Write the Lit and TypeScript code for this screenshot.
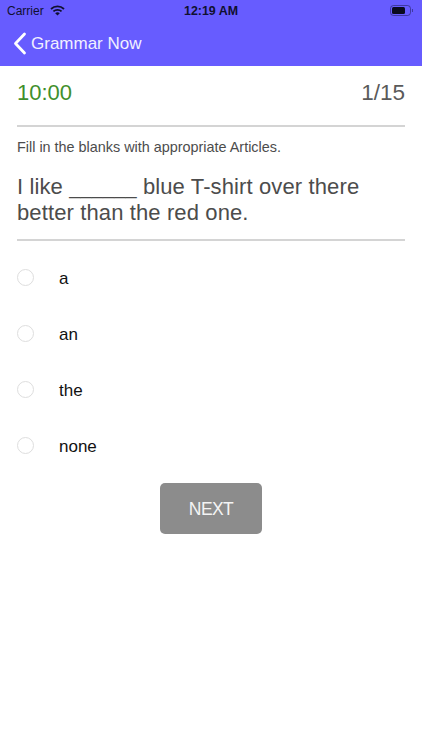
import { LitElement, html, css } from "lit";
import { customElement } from "lit/decorators.js";

@customElement("app-root")
export class AppRoot extends LitElement {
  static styles = css`
    :host { display: block; width: 422px; height: 750px; background: #fff; font-family: "Liberation Sans", Arial, sans-serif; overflow: hidden; }
    .top { background: #675cff; height: 66px; box-sizing: border-box; display: flex; flex-direction: column; }
    .status { height: 21px; position: relative; display: flex; align-items: center; padding: 0 7px; color: #101030; font-size: 12px; }
    .status .left { display: flex; align-items: center; gap: 6px; }
    .status .time { position: absolute; left: 0; right: 0; text-align: center; font-weight: 700; font-size: 12.4px; }
    .status .bat { margin-left: auto; margin-right: 1px; display: flex; }
    .nav { display: flex; align-items: center; height: 45px; padding: 0 0 0 13px; gap: 4px; color: #f1f0ff; font-size: 17px; box-sizing: border-box; }
    .content { padding: 0 17px; }
    .timer { display: flex; justify-content: space-between; align-items: center; height: 61px; box-sizing: border-box; border-bottom: 2px solid #d4d4d4; padding-bottom: 6px; font-size: 22px; }
    .clock { color: #3f8f2c; }
    .count { color: #5a5a5a; font-size: 22.5px; }
    .hint { font-size: 14.4px; color: #4c4c4c; margin-top: 12px; line-height: 16px; }
    .q { font-size: 22px; line-height: 26px; color: #4c4c4c; margin-top: 19px; padding-bottom: 13px; border-bottom: 2px solid #d4d4d4; letter-spacing: 0.12px; }
    .blank { display: inline-block; font-size: 20px; }
    .opts { display: flex; flex-direction: column; margin-top: 8px; }
    .opt { height: 56px; display: flex; align-items: center; gap: 25px; font-size: 17px; color: #111; }
    .opt .label { padding-top: 4px; }
    .radio { width: 17px; height: 17px; box-sizing: border-box; border-radius: 50%; border: 1.5px solid #dedede; background: #fff; }
    .next-wrap { display: flex; justify-content: center; margin-top: 10px; }
    .next { width: 102px; height: 51px; padding: 2px 0 0; background: #8c8c8c; color: #f4f4f4; border: 0; border-radius: 5px; font: inherit; font-size: 17.5px; letter-spacing: -0.6px; }
  `;

  render() {
    const options = ["a", "an", "the", "none"];
    return html`
      <div class="top">
        <div class="status">
          <div class="left">
            <span>Carrier</span>
            <svg width="15" height="11" viewBox="0 0 15 11"><path d="M1 4 A9.5 9.5 0 0 1 14 4" fill="none" stroke="#101030" stroke-width="1.8"/><path d="M3.4 6.4 A6 6 0 0 1 11.6 6.4" fill="none" stroke="#101030" stroke-width="1.8"/><path d="M5.2 8.2 A3.4 3.4 0 0 1 9.8 8.2 L7.5 10.6 Z" fill="#101030"/></svg>
          </div>
          <div class="time">12:19 AM</div>
          <div class="bat">
            <svg width="24" height="11" viewBox="0 0 24 11"><rect x="0.5" y="0.5" width="20" height="10" rx="3" fill="none" stroke="#101030" stroke-opacity="0.45"/><rect x="2" y="2" width="13" height="7" rx="1.5" fill="#0a0a20"/><rect x="22" y="4" width="1" height="3" fill="#101030" fill-opacity="0.45"/></svg>
          </div>
        </div>
        <div class="nav">
          <svg width="14" height="23" viewBox="0 0 14 23"><path d="M11.5 2 L2.5 11.5 L11.5 21" fill="none" stroke="#fff" stroke-width="2.8" stroke-linecap="round" stroke-linejoin="round"/></svg>
          <span>Grammar Now</span>
        </div>
      </div>
      <div class="content">
        <div class="timer"><span class="clock">10:00</span><span class="count">1/15</span></div>
        <div class="hint">Fill in the blanks with appropriate Articles.</div>
        <div class="q"><span>I like</span> <span class="blank">______</span> <span>blue T-shirt over there</span> <span>better than the red one.</span></div>
        <div class="opts">
          ${options.map((o) => html`<div class="opt"><span class="radio"></span><span class="label">${o}</span></div>`)}
        </div>
        <div class="next-wrap"><button class="next">NEXT</button></div>
      </div>
    `;
  }
}
